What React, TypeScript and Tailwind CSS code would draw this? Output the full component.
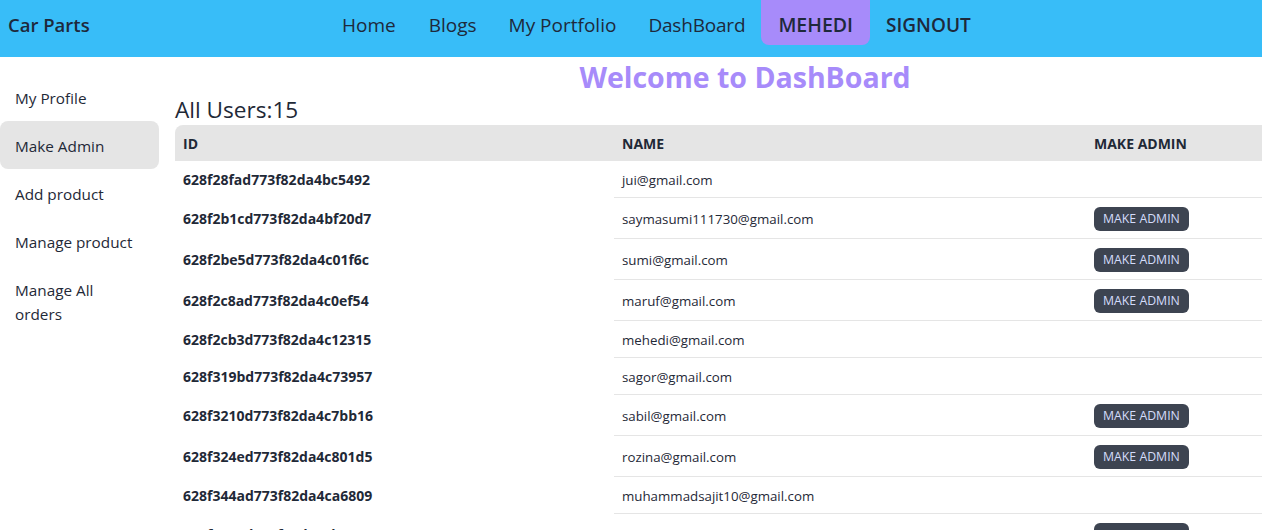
import React from "react";

const users: { id: string; email: string; btn: boolean }[] = [
  { id: "628f28fad773f82da4bc5492", email: "jui@gmail.com", btn: false },
  { id: "628f2b1cd773f82da4bf20d7", email: "saymasumi111730@gmail.com", btn: true },
  { id: "628f2be5d773f82da4c01f6c", email: "sumi@gmail.com", btn: true },
  { id: "628f2c8ad773f82da4c0ef54", email: "maruf@gmail.com", btn: true },
  { id: "628f2cb3d773f82da4c12315", email: "mehedi@gmail.com", btn: false },
  { id: "628f319bd773f82da4c73957", email: "sagor@gmail.com", btn: false },
  { id: "628f3210d773f82da4c7bb16", email: "sabil@gmail.com", btn: true },
  { id: "628f324ed773f82da4c801d5", email: "rozina@gmail.com", btn: true },
  { id: "628f344ad773f82da4ca6809", email: "muhammadsajit10@gmail.com", btn: false },
  { id: "628f3512d773f82da4cb1a22", email: "rahim@gmail.com", btn: true },
  { id: "628f3612d773f82da4cb1a23", email: "karim@gmail.com", btn: true },
];

export default function App() {
  return (
    <div
      className="w-[1262px] h-[530px] overflow-hidden bg-white text-[#1f2937]"
      style={{ fontFamily: '"Open Sans", "Noto Sans", sans-serif' }}
    >
      <nav className="h-[57px] bg-[#38bdf8] flex items-start">
        <div className="pl-2 h-[50px] flex items-center text-[18.5px] font-semibold text-[#1e293b] w-[342px] shrink-0">
          Car Parts
        </div>
        <div className="flex items-start text-[19px] text-[#1e293b]">
          <a className="h-[50px] flex items-center">Home</a>
          <a className="ml-[33px] h-[50px] flex items-center">Blogs</a>
          <a className="ml-[32px] h-[50px] flex items-center">My Portfolio</a>
          <a className="ml-[32px] h-[50px] flex items-center tracking-[-0.01em]">DashBoard</a>
          <button className="ml-[16px] h-[45px] px-[17px] bg-[#a78bfa] rounded-b-lg text-[19.5px] font-semibold text-[#1e293b] pt-[5px]">
            MEHEDI
          </button>
          <button className="ml-[16px] h-[50px] text-[19px] font-semibold">SIGNOUT</button>
        </div>
      </nav>
      <div className="flex">
        <aside className="w-[159px] shrink-0 pt-4 text-[15.3px] text-[#1f2937]">
          <ul>
            <li className="px-[15px] pt-[13px] pb-[11px] leading-6">My Profile</li>
            <li className="px-[15px] pt-[13px] pb-[11px] leading-6 bg-[#e5e5e5] rounded-lg">Make Admin</li>
            <li className="px-[15px] pt-[13px] pb-[11px] leading-6">Add product</li>
            <li className="px-[15px] pt-[13px] pb-[11px] leading-6">Manage product</li>
            <li className="px-[15px] pt-[13px] pb-[11px] leading-6">Manage All orders</li>
          </ul>
        </aside>
        <main className="ml-4 w-[1140px] shrink-0 pt-[2px]">
          <h1 className="text-center text-[28.5px] leading-[36px] font-bold text-[#a78bfa]">
            Welcome to DashBoard
          </h1>
          <h2 className="text-[22.6px] leading-[30px] text-[#1f2937]">All Users:15</h2>
          <table className="w-full text-[13.3px] border-collapse">
            <thead>
              <tr className="bg-[#e5e5e5] text-left">
                <th className="w-[439px] px-2 pt-[9px] pb-[7px] leading-5 text-[14px] font-bold rounded-tl-lg">ID</th>
                <th className="w-[472px] px-2 pt-[9px] pb-[7px] leading-5 text-[14px] font-bold">NAME</th>
                <th className="px-2 pt-[9px] pb-[7px] leading-5 text-[14px] font-bold">MAKE ADMIN</th>
              </tr>
            </thead>
            <tbody>
              {users.map((u) => (
                <tr key={u.id}>
                  <th className="text-left px-2 pt-[9px] pb-[7px] leading-5 text-[14px] font-bold">{u.id}</th>
                  <td className="px-2 pt-[9px] pb-[7px] leading-5 border-b border-[#e5e5e5]">{u.email}</td>
                  <td className="px-2 pt-[9px] pb-[7px] leading-5 border-b border-[#e5e5e5]">
                    {u.btn ? (
                      <button className="h-6 px-[9px] rounded-md bg-[#3d4451] text-[#d4dcfa] text-[12.3px] leading-6 block">
                        MAKE ADMIN
                      </button>
                    ) : null}
                  </td>
                </tr>
              ))}
            </tbody>
          </table>
        </main>
      </div>
    </div>
  );
}
